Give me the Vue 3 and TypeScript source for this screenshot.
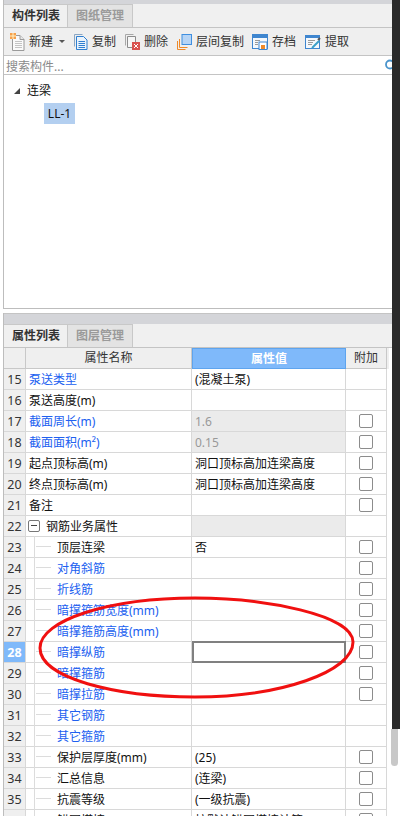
<script setup lang="ts">
interface Row {
  no: number
  name: string
  value?: string
  link?: boolean
  check?: boolean
  child?: boolean
  group?: boolean
  readonly?: boolean
  active?: boolean
}

const rows: Row[] = [
  { no: 15, name: '泵送类型', value: '(混凝土泵)', link: true },
  { no: 16, name: '泵送高度(m)' },
  { no: 17, name: '截面周长(m)', value: '1.6', link: true, check: true, readonly: true },
  { no: 18, name: '截面面积(m²)', value: '0.15', link: true, check: true, readonly: true },
  { no: 19, name: '起点顶标高(m)', value: '洞口顶标高加连梁高度', check: true },
  { no: 20, name: '终点顶标高(m)', value: '洞口顶标高加连梁高度', check: true },
  { no: 21, name: '备注', check: true },
  { no: 22, name: '钢筋业务属性', group: true, readonly: true },
  { no: 23, name: '顶层连梁', value: '否', check: true, child: true },
  { no: 24, name: '对角斜筋', link: true, check: true, child: true },
  { no: 25, name: '折线筋', link: true, check: true, child: true },
  { no: 26, name: '暗撑箍筋宽度(mm)', link: true, check: true, child: true },
  { no: 27, name: '暗撑箍筋高度(mm)', link: true, check: true, child: true },
  { no: 28, name: '暗撑纵筋', link: true, check: true, child: true, active: true },
  { no: 29, name: '暗撑箍筋', link: true, check: true, child: true },
  { no: 30, name: '暗撑拉筋', link: true, check: true, child: true },
  { no: 31, name: '其它钢筋', link: true, child: true },
  { no: 32, name: '其它箍筋', link: true, child: true },
  { no: 33, name: '保护层厚度(mm)', value: '(25)', check: true, child: true },
  { no: 34, name: '汇总信息', value: '(连梁)', check: true, child: true },
  { no: 35, name: '抗震等级', value: '(一级抗震)', check: true, child: true },
  { no: 36, name: '锚固搭接', value: '按默认锚固搭接计算', check: true, child: true }
]
</script>

<template>
  <div class="page">
    <div class="main">
      <section class="panel top-panel">
        <div class="title-bar first"></div>
        <div class="tabs">
          <div class="tab on">构件列表</div>
          <div class="tab">图纸管理</div>
        </div>
        <div class="toolbar">
          <div class="tool">
            <svg class="i15 tall" viewBox="0 0 15 18">
              <path d="M2.500 2.500h7.500l4 4v11h-11.500z" fill="#fafafa" stroke="#9a9a9a" />
              <path d="M10 2.500v4h4" fill="#e8e8e8" stroke="#9a9a9a" />
              <path d="M5 8.500h7M5 10.500h7M5 12.500h7M5 14.500h7" stroke="#c4c4c4" />
              <rect x="0" y="0" width="6" height="6" fill="#f6a04a" />
              <path d="M0 3h6M3 0v6" stroke="#fff2c8" />
            </svg>
            <span>新建</span>
            <i class="caret"></i>
          </div>
          <div class="tool">
            <svg class="i14" viewBox="0 0 14 16">
              <path d="M.5 12.500V.5h8" fill="none" stroke="#8aa6c4" />
              <path d="M2.500 2.500h7l3.500 3.500v9.500h-10.500z" fill="#eaf3fc" stroke="#2f7fd0" />
              <path d="M4.500 7.500h6.500M4.500 9.500h6.500M4.500 11.500h6.500M4.500 13.500h6.500" stroke="#2f7fd0" />
            </svg>
            <span>复制</span>
          </div>
          <div class="tool">
            <svg class="i15" viewBox="0 0 15 16">
              <path d="M.5 11.500V.5h8" fill="none" stroke="#a8a8a8" />
              <path d="M2.500 2.500h8v11h-8z" fill="#f6f6f6" stroke="#8c8c8c" />
              <rect x="7" y="8" width="8" height="8" fill="#d9534f" />
              <path d="M9 10l4 4M13 10l-4 4" stroke="#fff" />
            </svg>
            <span>删除</span>
          </div>
          <div class="tool">
            <svg class="i15" viewBox="0 0 15 16">
              <path d="M.5 7v8.500h8" fill="none" stroke="#ef8a2a" />
              <path d="M2.500 5v8.500h8" fill="none" stroke="#ef8a2a" />
              <rect x="5" y=".5" width="9.500" height="10" fill="#b6d4f5" stroke="#3f8fe0" />
            </svg>
            <span>层间复制</span>
          </div>
          <div class="tool save">
            <svg class="i16" viewBox="0 0 16 16">
              <rect x=".5" y=".5" width="15" height="14" fill="#f4f8fc" stroke="#3f86cf" />
              <rect x="1" y="1" width="14" height="3" fill="#3f86cf" />
              <path d="M3 6.500h5M3 8.500h3M3 10.500h3" stroke="#9a9a9a" />
              <rect x="7" y="8" width="8" height="7.500" fill="#fff" stroke="#3f86cf" />
              <rect x="9" y="11" width="4" height="4" fill="#ef8a2a" />
            </svg>
            <span>存档</span>
          </div>
          <div class="tool">
            <svg class="i16" viewBox="0 0 16 16">
              <rect x=".5" y="1.500" width="14" height="13" fill="#f4f8fc" stroke="#3f86cf" />
              <rect x="1" y="2" width="13" height="2" fill="#3f86cf" />
              <path d="M3 6.500h7M3 8.500h5M3 10.500h4" stroke="#9a9a9a" />
              <path d="M7 14l7-7" stroke="#3aa0c8" stroke-width="2" />
              <path d="M13 6l2-2" stroke="#555" stroke-width="2" />
            </svg>
            <span>提取</span>
          </div>
        </div>
        <div class="search">
          <span class="placeholder">搜索构件...</span>
          <svg class="search-icon" viewBox="0 0 12 12">
            <circle cx="6" cy="5.500" r="4" fill="none" stroke="#4a94cc" stroke-width="1.800" />
          </svg>
        </div>
        <div class="tree">
          <div class="tree-root">
            <i class="tree-arrow"></i>
            <span>连梁</span>
          </div>
          <div class="tree-leaf"><span>LL-1</span></div>
        </div>
      </section>

      <section class="panel bottom-panel">
        <div class="title-bar"></div>
        <div class="tabs">
          <div class="tab on">属性列表</div>
          <div class="tab">图层管理</div>
        </div>
        <div class="grid">
          <div class="row head">
            <div class="c-no"></div>
            <div class="c-name">属性名称</div>
            <div class="c-value">属性值</div>
            <div class="c-extra">附加</div>
          </div>
          <div v-for="r in rows" :key="r.no" class="row body-row" :class="{ current: r.active }">
            <div class="c-no">{{ r.no }}</div>
            <div class="c-name" :class="{ link: r.link, child: r.child, group: r.group }">
              <template v-if="r.group">
                <i class="minus"></i>
              </template>
              <template v-if="r.child">
                <i class="branch"></i>
              </template>
              <span>{{ r.name }}</span>
            </div>
            <div class="c-value" :class="{ readonly: r.readonly, editing: r.active }">{{ r.value }}</div>
            <div class="c-extra"><i v-if="r.check" class="check"></i></div>
          </div>
        </div>
      </section>

      <svg class="annotation" viewBox="0 0 400 816">
        <path
          d="M40 648C40 620 110 598 195 598C265 598 353 615 353 642C353 672 280 697 195 697C115 697 40 678 40 648Z"
          fill="none"
          stroke="#f01010"
          stroke-width="3"
        />
      </svg>
    </div>
    <div class="side">
      <div class="side-dark"></div>
      <div class="side-thumb"></div>
    </div>
  </div>
</template>

<style>
html,
body {
  margin: 0;
  background: #fff;
  overflow: hidden;
}
</style>

<style scoped>
.page {
  display: flex;
  width: 400px;
  height: 816px;
  overflow: hidden;
  font: 12px/1 "Noto Sans", "Noto Sans CJK SC", sans-serif;
  color: #111;
  background: #fff;
}
.main {
  position: relative;
  width: 392px;
  height: 816px;
  padding-left: 3px;
  box-sizing: border-box;
  overflow: hidden;
}
.annotation {
  position: absolute;
  left: 0;
  top: 0;
  width: 400px;
  height: 816px;
  pointer-events: none;
}
.side {
  width: 8px;
  flex: none;
}
.side-dark {
  height: 729px;
  background: #2a2a2a;
}
.side-thumb {
  width: 7px;
  height: 37px;
  margin-left: -1px;
  background: #c8c8c8;
  border-radius: 0 0 4px 4px;
}
.panel {
  border-left: 1px solid #bdbdbd;
}
.top-panel {
  height: 309px;
  box-sizing: border-box;
  border-bottom: 1px solid #bdbdbd;
}
.bottom-panel {
  margin-top: 4px;
}
.title-bar {
  height: 10px;
  background: #d4d5d9;
  border-top: 1px solid #c4c4c4;
}
.title-bar.first {
  height: 4px;
  border-top: 0;
}
.tabs {
  display: flex;
  height: 23px;
  background: #f0f0f0;
  border-bottom: 1px solid #c4c4c4;
}
.tab {
  box-sizing: border-box;
  width: 65px;
  height: 23px;
  padding-left: 8px;
  line-height: 22px;
  font-weight: 700;
  color: #9a9a9a;
  background: #e3e3e3;
  border-top: 1px solid #c8c8c8;
  border-right: 1px solid #c8c8c8;
}
.tab.on {
  width: 64px;
  color: #333;
  background: #f0f0f0;
}
.toolbar {
  display: flex;
  align-items: center;
  gap: 9px;
  height: 27px;
  padding-left: 6px;
  background: #efefef;
  border-bottom: 1px solid #c4c4c4;
}
.tool {
  display: flex;
  align-items: center;
  gap: 4px;
  color: #333;
}
.tool span {
  padding-top: 1px;
}
.save {
  margin-left: -1px;
}
.i14 {
  width: 14px;
  height: 16px;
}
.i15 {
  width: 15px;
  height: 16px;
}
.i15.tall {
  height: 18px;
}
.i16 {
  width: 16px;
  height: 16px;
}
.caret {
  margin-left: 2px;
  border-top: 3px solid #555;
  border-left: 3px solid transparent;
  border-right: 3px solid transparent;
}
.search {
  display: flex;
  align-items: center;
  justify-content: space-between;
  height: 18px;
  padding-left: 2px;
  background: #fff;
  border-bottom: 1px solid #c4c4c4;
}
.placeholder {
  padding-top: 3px;
  color: #8a8a8a;
}
.search-icon {
  width: 12px;
  height: 12px;
  margin-right: -4px;
}
.tree {
  padding: 8px 0 0 10px;
}
.tree-root {
  display: flex;
  align-items: center;
  gap: 7px;
  height: 16px;
}
.tree-arrow {
  width: 0;
  height: 0;
  border-bottom: 6px solid #444;
  border-left: 6px solid transparent;
}
.tree-leaf {
  margin: 4px 0 0 30px;
}
.tree-leaf span {
  display: inline-block;
  width: 31px;
  height: 21px;
  line-height: 21px;
  text-align: center;
  background: #b3cff0;
}
.row {
  display: flex;
  height: 21px;
  box-sizing: border-box;
}
.row > div {
  display: flex;
  align-items: center;
  box-sizing: border-box;
  flex: none;
  border-right: 1px solid #d8d8d8;
  border-bottom: 1px solid #d8d8d8;
  white-space: nowrap;
}
.body-row > .c-no,
.body-row > .c-name,
.body-row > .c-value {
  padding-top: 2px;
}
.c-no {
  width: 22px;
  justify-content: center;
  background: #efefef;
  color: #333;
  font-size: 12.500px;
}
.c-name {
  width: 166px;
  padding-left: 3px;
  color: #111;
}
.c-value {
  width: 154px;
  padding-left: 3px;
}
.c-extra {
  width: 41px;
  justify-content: center;
}
.head > div {
  background: #efefef;
  justify-content: center;
  color: #333;
  border-color: #c8c8c8;
}
.head .c-name {
  padding-left: 0;
}
.head .c-value {
  padding-left: 0;
  background: #7fb9fa;
  color: #fff;
  font-weight: 700;
  border: 1px solid #5ea4ee;
}
.head .c-extra {
  box-shadow: 2px 0 0 #efefef;
}
.c-name.link {
  color: #2060f0;
}
.c-name.child {
  position: relative;
  padding-left: 31px;
}
.branch {
  position: absolute;
  left: 8px;
  top: -1px;
  bottom: -1px;
  width: 16px;
  border-left: 1px solid #dcdcdc;
}
.branch::after {
  content: "";
  position: absolute;
  left: 1px;
  right: 0;
  top: 10px;
  border-top: 1px solid #dcdcdc;
}
.c-name.group {
  gap: 6px;
  padding-left: 2px;
}
.minus {
  position: relative;
  width: 12px;
  height: 12px;
  margin-top: -2px;
  box-sizing: border-box;
  border: 1px solid #777;
  border-radius: 2px;
}
.minus::after {
  content: "";
  position: absolute;
  left: 2px;
  right: 2px;
  top: 4px;
  border-top: 1px solid #444;
}
.readonly {
  background: #ebebeb;
  color: #999;
}
.row > .editing {
  border: 2px solid #808080;
  margin-top: -1px;
  height: 22px;
  background: #fff;
}
.current .c-no {
  background: #7fb9fa;
  color: #fff;
  font-weight: 700;
}
.check {
  width: 14px;
  height: 14px;
  box-sizing: border-box;
  border: 1px solid #8c8c8c;
  border-radius: 2px;
  background: #fff;
}
</style>
